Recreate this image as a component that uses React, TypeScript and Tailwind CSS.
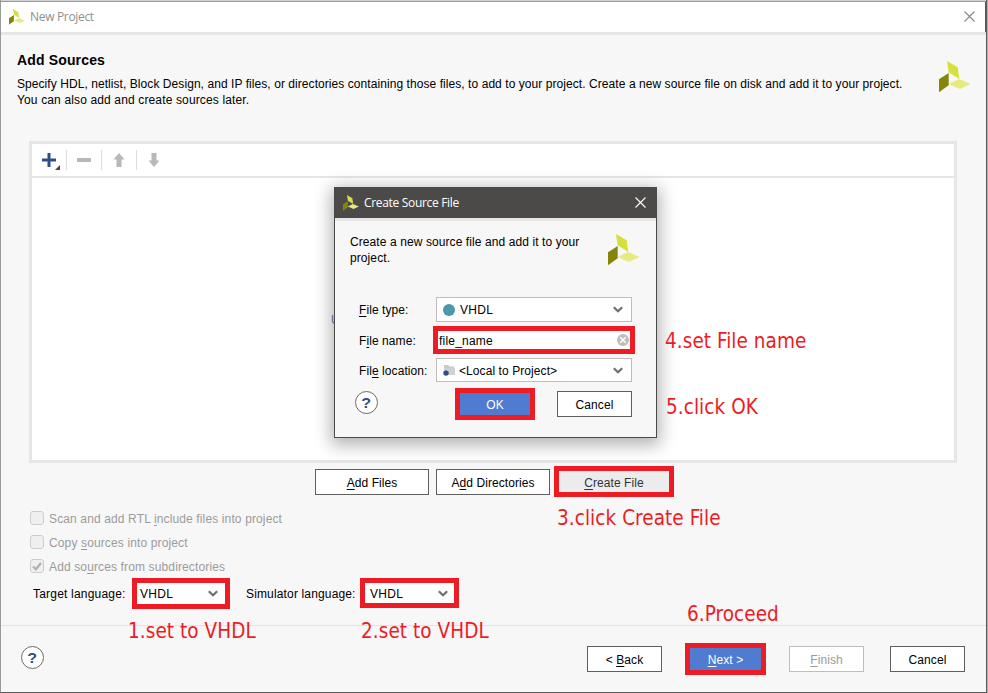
import React from "react";

function Logo({ size, light = false }: { size: number; light?: boolean }) {
  return (
    <svg width={size} height={size} viewBox="0 0 32 32" className="block shrink-0">
      <path d="M8 0 18.7 6.3 20.3 18 9.7 11.3Z" fill={light ? "#d9dc52" : "#d6e03a"} />
      <path d="M0 18.3 9.7 12V24.3L0 31.3Z" fill="#858607" />
      <path d="M9.7 23 20 18 31.7 23 21 28Z" fill="#e6ea7f" />
    </svg>
  );
}

function Chevron() {
  return (
    <svg width="10" height="7" viewBox="0 0 10 7" className="block shrink-0">
      <path d="M.8 1.2 5 5.2 9.2 1.2" fill="none" stroke="#6e6e6e" strokeWidth="2.2" />
    </svg>
  );
}

function Close({ color }: { color: string }) {
  return (
    <svg width="11" height="11" viewBox="0 0 11 11" className="block shrink-0">
      <path d="M.5.5 10.5 10.5M10.5.5.5 10.5" stroke={color} strokeWidth="1.1" />
    </svg>
  );
}

function Help() {
  return (
    <div className="flex h-[23px] w-[23px] shrink-0 items-center justify-center rounded-full border border-[#6b6b6b] bg-white text-[14px] font-bold leading-none tracking-normal text-[#2f4d87]">
      <span className="scale-x-115">?</span>
    </div>
  );
}

function Button({ children, className }: { children: React.ReactNode; className: string }) {
  return (
    <button className={`flex shrink-0 items-center justify-center whitespace-pre tracking-[0.07px] ${className}`}>
      <span>{children}</span>
    </button>
  );
}

function Check({ checked = false, children }: { checked?: boolean; children: React.ReactNode }) {
  return (
    <div className="flex h-6 items-center text-[#9b9b9b]">
      <span className="mr-[5px] flex h-[14px] w-[14px] items-center justify-center rounded-[3px] border-[1.5px] border-[#cdcdcd] bg-[#efefef]">
        {checked && (
          <svg width="10" height="9" viewBox="0 0 10 9" className="shrink-0">
            <path d="M1 4.5 3.8 7.2 9 1" fill="none" stroke="#b0b0b0" strokeWidth="2.3" />
          </svg>
        )}
      </span>
      <span className="pt-0.5 tracking-[0.13px]">{children}</span>
    </div>
  );
}

function Note({ className, children }: { className: string; children: React.ReactNode }) {
  return (
    <div
      className={`absolute whitespace-nowrap font-['DejaVu_Sans_Condensed','DejaVu_Sans',sans-serif] text-[20.5px] leading-6 tracking-[0.06px] text-[#ed1c24] [font-stretch:condensed] ${className}`}
    >
      {children}
    </div>
  );
}

function Toolbar() {
  return (
    <div className="flex h-[34px] items-center border-b-2 border-[#e6e6e6] pl-[10px]">
      <svg width="18" height="20" viewBox="0 0 18 20" className="mr-[6px]">
        <path d="M0 10H14M7 3V17" stroke="#2f4d87" strokeWidth="3" />
        <path d="M18 15V20H13Z" fill="#444" />
      </svg>
      <div className="mr-[10px] h-5 w-px bg-[#dcdcdc]" />
      <div className="mr-[10px] h-1 w-[14px] bg-[#b8b8b8]" />
      <div className="mr-[11px] h-5 w-px bg-[#dcdcdc]" />
      <svg width="12" height="14" viewBox="0 0 12 14" className="mr-[11px]">
        <path d="M6 0 11.5 6.5H8.5V14H3.5V6.5H.5Z" fill="#b8b8b8" />
      </svg>
      <div className="mr-[11px] h-5 w-px bg-[#dcdcdc]" />
      <svg width="12" height="14" viewBox="0 0 12 14">
        <path d="M6 14 11.5 7.5H8.5V0H3.5V7.5H.5Z" fill="#b8b8b8" />
      </svg>
    </div>
  );
}

function CreateDialog() {
  return (
    <div className="absolute left-[334px] top-[187px] flex h-[251px] w-[323px] flex-col border border-[#4b4a48] bg-[#f7f7f7] shadow-[0_4px_16px_3px_rgba(0,0,0,0.3)]">
      <div className="flex h-[30px] shrink-0 items-center bg-[#4b4a48] pl-2 pr-[10px] font-['Open_Sans','Noto_Sans',sans-serif] text-[12px] text-white">
        <Logo size={16} light />
        <span className="ml-[5px] tracking-[-0.32px]">Create Source File</span>
        <span className="mb-[2px] ml-auto">
          <Close color="#fff" />
        </span>
      </div>
      <div className="h-[3px] shrink-0 bg-[#e6e6e6]" />
      <div className="flex h-[76px] shrink-0 justify-between pl-[15px] pr-4 pt-[13px]">
        <p className="leading-4 tracking-[0.09px]">
          Create a new source file and add it to your
          <br />
          project.
        </p>
        <Logo size={32} />
      </div>
      <div className="flex h-[25px] shrink-0 items-center pl-6">
        <span className="w-[77px]"><u>F</u>ile type:</span>
        <div className="flex h-[25px] w-[196px] items-center border border-[#bdbdbd] bg-white pl-[6px] pr-2">
          <span className="mr-[5px] h-3 w-3 rounded-full bg-[#4a97ae]" />
          <span className="grow tracking-[0.3px]">VHDL</span>
          <Chevron />
        </div>
      </div>
      <div className="mt-1 flex h-[28px] shrink-0 items-center pl-6">
        <span className="w-[74px] pt-0.5">F<u>i</u>le name:</span>
        <div className="flex h-[28px] w-[202px] items-center border-[5px] border-[#ed1c24] bg-white pl-px pr-px">
          <span className="grow pt-0.5 tracking-[0.2px]">file_name</span>
          <svg width="12" height="12" viewBox="0 0 12 12">
            <circle cx="6" cy="6" r="6" fill="#bdbdbd" />
            <path d="M3.3 3.3 8.7 8.7M8.7 3.3 3.3 8.7" stroke="#fff" strokeWidth="1.5" />
          </svg>
        </div>
      </div>
      <div className="mt-1 flex h-[24px] shrink-0 items-center pl-6">
        <span className="w-[77px] whitespace-nowrap pt-px">Fil<u>e</u> location:</span>
        <div className="flex h-[24px] w-[196px] items-center border border-[#bdbdbd] bg-white pl-[6px] pr-2">
          <svg width="12" height="12" viewBox="0 0 12 12" className="mr-1">
            <path d="M1 1H5L6.5 2.5H11V4H1Z" fill="#c9c9c9" />
            <path d="M1 4H12V11H5V6H1Z" fill="#d0d0d0" />
            <circle cx="3" cy="9" r="2.7" fill="#2f4d87" />
          </svg>
          <span className="grow pt-px">&lt;Local to Project&gt;</span>
          <Chevron />
        </div>
      </div>
      <div className="flex shrink-0 items-start pl-5 pt-[6px]">
        <div className="mt-[3px]">
          <Help />
        </div>
        <Button className="ml-[77px] h-[32px] w-[80px] border-[5px] border-[#ed1c24] bg-[#4f7bd1] pt-px text-white">OK</Button>
        <Button className="ml-[22px] mt-[3px] h-[26px] w-[75px] border border-[#5f5f5f] bg-white pt-px">Cancel</Button>
      </div>
    </div>
  );
}

export default function App() {
  return (
    <div className="h-[693px] w-[988px] overflow-hidden bg-[#b0b0b0] pr-px">
      <div className="relative flex h-[693px] w-[987px] flex-col border-b border-l border-r border-b-[#5a5a5a] border-l-[#9a9a9a] border-r-[#5a5a5a] bg-[#f7f7f7] font-['Liberation_Sans',Arial,sans-serif] text-[12px] tracking-[0.08px] text-black [&_u]:underline-offset-2">
        <div className="h-px shrink-0 bg-[#d2d2d2]" />
        <div className="h-px shrink-0 bg-[#999]" />
        <header className="flex h-[30px] shrink-0 items-center border-r border-[#5a5a5a] bg-white pl-2 pr-[10px] font-['Open_Sans','Noto_Sans',sans-serif] text-[12px] text-[#8f8f8f]">
          <Logo size={16} light />
          <span className="ml-[5px] tracking-[-0.32px]">New Project</span>
          <span className="mb-[2px] ml-auto">
            <Close color="#888" />
          </span>
        </header>
        <div className="h-[3px] shrink-0 bg-[#e6e6e6]" />

        <section className="flex h-[106px] shrink-0 justify-between pl-4 pr-[15px]">
          <div className="pt-4">
            <h1 className="text-[14px] font-bold leading-[18px] tracking-[0.15px]">Add Sources</h1>
            <p className="mt-[7px] whitespace-nowrap leading-4 tracking-[0.065px]">
              Specify HDL, netlist, Block Design, and IP files, or directories containing those files, to add to your project. Create a new source file on disk and add it to your project.
            </p>
            <p className="leading-4 tracking-[0.14px]">You can also add and create sources later.</p>
          </div>
          <div className="pt-[26px]">
            <Logo size={32} />
          </div>
        </section>

        <main className="ml-7 h-[322px] w-[928px] shrink-0 border-[3px] border-[#e6e6e6] bg-white">
          <Toolbar />
          <div className="pl-[299px] pt-[133px] text-[#5f7db5]">U</div>
        </main>

        <div className="flex h-[45px] shrink-0 items-start pl-[314px] pt-[3px]">
          <Button className="mt-[3px] h-[26px] w-[114px] border border-[#5f5f5f] bg-white pt-px"><u>A</u>dd Files</Button>
          <Button className="ml-[7px] mt-[3px] h-[26px] w-[114px] border border-[#5f5f5f] bg-white pt-px">A<u>d</u>d Directories</Button>
          <Button className="ml-1 h-[31px] w-[120px] border-[5px] border-[#ed1c24] bg-[#ececec] pt-0.5 text-[#333]"><u>C</u>reate File</Button>
        </div>

        <div className="flex h-[70px] shrink-0 flex-col pl-[29px]">
          <div className="-mt-0.5">
            <Check>Scan and add RTL <u>i</u>nclude files into project</Check>
            <Check>Copy <u>s</u>ources into project</Check>
            <Check checked>Add so<u>u</u>rces from subdirectories</Check>
          </div>
        </div>

        <div className="flex h-[47px] shrink-0 items-start pl-8">
          <span className="w-[99px] pt-[7px] tracking-[0.2px]">Target language:</span>
          <div className="flex h-[31px] w-[98px] items-center border-[5px] border-[#ed1c24] bg-white pl-[3px] pr-[7px]">
            <span className="grow tracking-[0.3px]">VHDL</span>
            <Chevron />
          </div>
          <span className="ml-4 w-[114px] whitespace-nowrap pt-[7px] tracking-[0.15px]">Simulator language:</span>
          <div className="flex h-[30px] w-[99px] items-center border-[5px] border-[#ed1c24] bg-white pl-[5px] pr-[6px]">
            <span className="grow pt-px tracking-[0.3px]">VHDL</span>
            <Chevron />
          </div>
        </div>

        <footer className="flex h-[67px] shrink-0 items-start border-t border-[#e2e2e2] pl-5 pt-[17px]">
          <div className="mt-[3px]">
            <Help />
          </div>
          <Button className="ml-[543px] mt-[3px] h-[26px] w-[75px] border border-[#5f5f5f] bg-white pt-px">&lt; <u>B</u>ack</Button>
          <Button className="ml-[23px] h-[32px] w-[81px] border-[5px] border-[#ed1c24] bg-[#4f7bd1] pt-px text-white"><u>N</u>ext &gt;</Button>
          <Button className="ml-[23px] mt-[3px] h-[26px] w-[75px] border border-[#bdbdbd] bg-white pt-px text-[#9b9b9b]"><u>F</u>inish</Button>
          <Button className="ml-[26px] mt-[3px] h-[26px] w-[75px] border border-[#5f5f5f] bg-white pt-px">Cancel</Button>
        </footer>

        <div className="absolute -left-px top-0 h-[693px] w-[988px]">
          <CreateDialog />
          <Note className="left-[128px] top-[619px]">1.set to VHDL</Note>
          <Note className="left-[361px] top-[619px]">2.set to VHDL</Note>
          <Note className="left-[557px] top-[506px]">3.click Create File</Note>
          <Note className="left-[665px] top-[329px]">4.set File name</Note>
          <Note className="left-[666px] top-[395px]">5.click OK</Note>
          <Note className="left-[687px] top-[602px]">6.Proceed</Note>
        </div>
      </div>
    </div>
  );
}
